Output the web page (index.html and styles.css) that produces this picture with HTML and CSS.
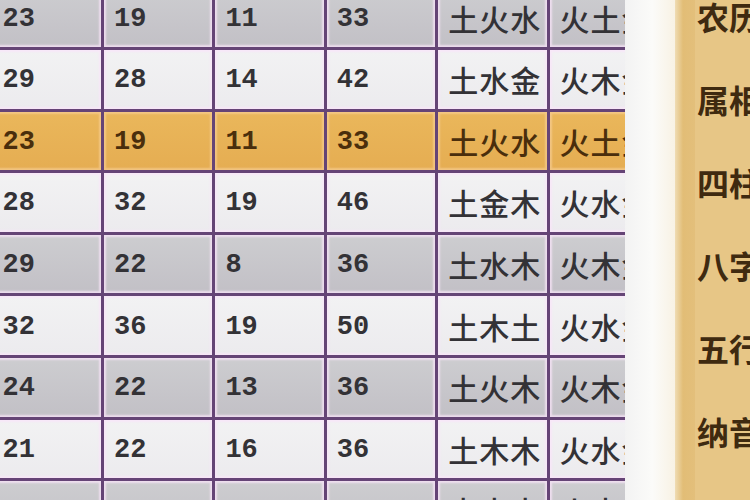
FILE: index.html
```html
<!DOCTYPE html>
<html lang="zh">
<head>
<meta charset="utf-8">
<link rel="stylesheet" href="styles.css">
</head>
<body>
<div class="page">
  <div class="table-wrap">
    <div class="grid">
      <div class="c g num">23</div><div class="c g num">19</div><div class="c g num">11</div><div class="c g num">33</div><div class="c g cjk">土火水</div><div class="c g cjk">火土金</div>
      <div class="c w num">29</div><div class="c w num">28</div><div class="c w num">14</div><div class="c w num">42</div><div class="c w cjk">土水金</div><div class="c w cjk">火木金</div>
      <div class="c o num">23</div><div class="c o num">19</div><div class="c o num">11</div><div class="c o num">33</div><div class="c o cjk">土火水</div><div class="c o cjk">火土金</div>
      <div class="c w num">28</div><div class="c w num">32</div><div class="c w num">19</div><div class="c w num">46</div><div class="c w cjk">土金木</div><div class="c w cjk">火水金</div>
      <div class="c g num">29</div><div class="c g num">22</div><div class="c g num">8</div><div class="c g num">36</div><div class="c g cjk">土水木</div><div class="c g cjk">火木金</div>
      <div class="c w num">32</div><div class="c w num">36</div><div class="c w num">19</div><div class="c w num">50</div><div class="c w cjk">土木土</div><div class="c w cjk">火水金</div>
      <div class="c g num">24</div><div class="c g num">22</div><div class="c g num">13</div><div class="c g num">36</div><div class="c g cjk">土火木</div><div class="c g cjk">火木金</div>
      <div class="c w num">21</div><div class="c w num">22</div><div class="c w num">16</div><div class="c w num">36</div><div class="c w cjk">土木木</div><div class="c w cjk">火水金</div>
      <div class="c g num">26</div><div class="c g num">22</div><div class="c g num">9</div><div class="c g num">35</div><div class="c g cjk">土水土</div><div class="c g cjk">火木金</div>
    </div>
  </div>
  <div class="gap"></div>
  <div class="panel">
    <div class="strip"></div>
    <div class="labels">
      <div class="label">农历</div>
      <div class="label">属相</div>
      <div class="label">四柱</div>
      <div class="label">八字</div>
      <div class="label">五行</div>
      <div class="label">纳音</div>
      <div class="label">喜用</div>
    </div>
  </div>
</div>
</body>
</html>
```
FILE: styles.css
```css
html, body {
  margin: 0;
  padding: 0;
  background: #f7f6f3;
}
.page {
  width: 750px;
  height: 500px;
  overflow: hidden;
  display: flex;
  background: #f7f6f3;
}
.table-wrap {
  width: 625px;
  flex: 0 0 625px;
  height: 500px;
  overflow: hidden;
}
.grid {
  display: grid;
  grid-template-columns: repeat(6, 108.4px);
  grid-auto-rows: 58.6px;
  gap: 3px;
  background: #654476;
  width: max-content;
  margin-left: -7.4px;
  margin-top: -11.6px;
}
.c {
  display: flex;
  align-items: center;
  padding-left: 10px;
  white-space: nowrap;
  overflow: hidden;
  box-shadow: inset 0 0 2px 2px rgba(250, 228, 250, 0.75);
  color: #333236;
}
.g { background: linear-gradient(#cdcdd0, #c2c0c6); }
.w { background: linear-gradient(#f2f2f3, #ecebee); }
.o {
  background: linear-gradient(#eab75b, #e5ad52);
  color: #4a2e0c;
  box-shadow: inset 0 0 2px 2px rgba(250, 210, 160, 0.6);
}
.num {
  font-family: "Liberation Mono", "DejaVu Sans Mono", monospace;
  font-weight: 700;
  font-size: 27px;
  padding-top: 2px;
}
.cjk {
  font-family: "Noto Sans CJK SC", "Noto Sans", sans-serif;
  font-weight: 500;
  font-size: 30px;
  letter-spacing: 1px;
}
.gap {
  flex: 0 0 50px;
  background: linear-gradient(90deg, #f3f3f3, #fbfbf9 55%, #f8f2e4);
}
.panel {
  flex: 1;
  display: flex;
  background: #e7c686;
}
.strip {
  flex: 0 0 20px;
  background: linear-gradient(90deg, #efdcb4, #e2bd76 40%, #e3bf7b);
}
.labels {
  flex: 1;
  padding-left: 2px;
  margin-top: -25.5px;
  overflow: hidden;
}
.label {
  height: 83px;
  line-height: 83px;
  font-family: "Noto Sans CJK SC", "Noto Sans", sans-serif;
  font-weight: 700;
  font-size: 32px;
  color: #3f2a10;
  white-space: nowrap;
}
```
